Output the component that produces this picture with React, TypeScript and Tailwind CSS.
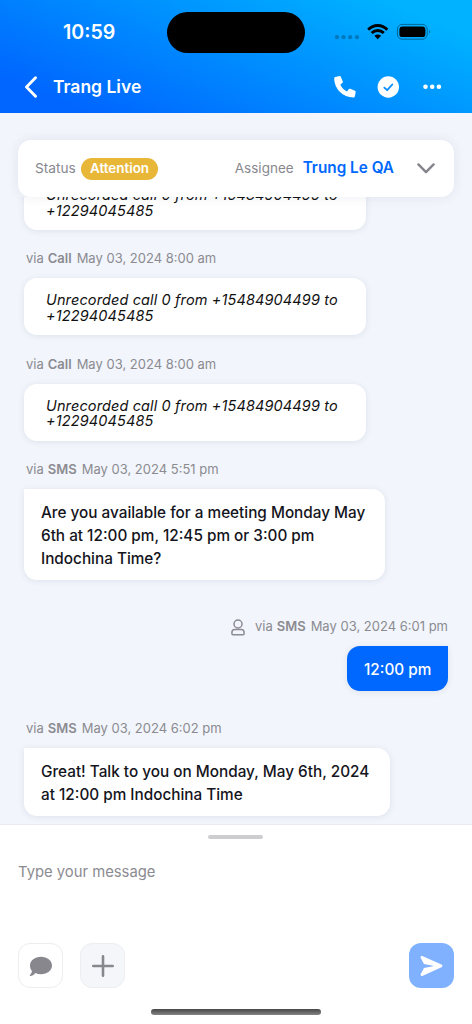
import type { ReactNode } from "react";

interface Message {
  id: number;
  channel: string;
  time?: string;
  lines: string[];
  kind: "call" | "incoming" | "outgoing";
  spacing: string;
  size: string;
}

const messages: Message[] = [
  {
    id: 1,
    channel: "Call",
    lines: ["Unrecorded call 0 from +15484904499 to", "+12294045485"],
    kind: "call",
    spacing: "",
    size: "w-[342px] h-[57px]",
  },
  {
    id: 2,
    channel: "Call",
    time: "May 03, 2024 8:00 am",
    lines: ["Unrecorded call 0 from +15484904499 to", "+12294045485"],
    kind: "call",
    spacing: "mt-[19px]",
    size: "w-[342px] h-[57px]",
  },
  {
    id: 3,
    channel: "Call",
    time: "May 03, 2024 8:00 am",
    lines: ["Unrecorded call 0 from +15484904499 to", "+12294045485"],
    kind: "call",
    spacing: "mt-[19.5px]",
    size: "w-[342px] h-[57px]",
  },
  {
    id: 4,
    channel: "SMS",
    time: "May 03, 2024 5:51 pm",
    lines: ["Are you available for a meeting Monday May", "6th at 12:00 pm, 12:45 pm or 3:00 pm", "Indochina Time?"],
    kind: "incoming",
    spacing: "mt-[19.5px]",
    size: "w-[361px] h-[91px]",
  },
  {
    id: 5,
    channel: "SMS",
    time: "May 03, 2024 6:01 pm",
    lines: ["12:00 pm"],
    kind: "outgoing",
    spacing: "mt-[37px]",
    size: "w-[101px] h-[45px]",
  },
  {
    id: 6,
    channel: "SMS",
    time: "May 03, 2024 6:02 pm",
    lines: ["Great! Talk to you on Monday, May 6th, 2024", "at 12:00 pm Indochina Time"],
    kind: "incoming",
    spacing: "mt-7",
    size: "w-[366px] h-[68px]",
  },
];

function bubbleClass(kind: Message["kind"]): string {
  switch (kind) {
    case "call":
      return "rounded-[13px] bg-white pl-[22px] pt-[2px] text-[14.5px] leading-[15.5px] tracking-[0.12px] italic text-[#111]";
    case "outgoing":
      return "rounded-[13px] rounded-tr-none bg-[#0068ff] pl-[17px] pt-px text-[15.3px] leading-[23px] font-medium text-white";
    default:
      return "rounded-[13px] rounded-tl-none bg-white pl-[17px] pt-px text-[15.3px] leading-[23px] font-medium text-[#141420]";
  }
}

function StatusBar() {
  return (
    <div className="flex h-[65px] items-end">
      <div className="flex h-[65px] w-[167px] items-center pl-[63px] text-[19.6px] font-semibold">10:59</div>
      <div className="mb-[12px] h-[41px] w-[138px] rounded-full bg-black" />
      <div className="ml-[30px] flex h-[65px] items-center pb-[2px] text-black">
        <svg width="96" height="18" viewBox="0 0 96 18" fill="currentColor">
          <g opacity="0.25">
            <circle cx="2" cy="14.2" r="2.1" />
            <circle cx="8.5" cy="14.2" r="2.1" />
            <circle cx="15.2" cy="14.2" r="2.1" />
            <circle cx="22" cy="14.2" r="2.1" />
          </g>
          <g fill="none" stroke="currentColor" strokeWidth="3">
            <path d="M33.2 6.8C38.5 1.2 47 1.2 52.3 6.8" />
            <path d="M36.7 10C40.2 6.5 45.3 6.5 48.8 10" />
          </g>
          <path d="M39.4 12.7C41.4 11 44.1 11 46.1 12.7L42.75 16.3Z" />
          <rect x="62.4" y="1.4" width="29.8" height="14.8" rx="4.8" fill="none" stroke="currentColor" strokeOpacity="0.4" />
          <rect x="64.4" y="3.5" width="26" height="10.6" rx="3.2" />
          <path d="M94 6.5Q95.7 8.8 94 11.1Z" opacity="0.45" />
        </svg>
      </div>
    </div>
  );
}

function Header() {
  return (
    <header className="h-[113px] shrink-0 bg-[linear-gradient(22deg,#0066ff_12%,#00b2ff_88%)] text-white">
      <StatusBar />
      <div className="flex h-[44px] items-center">
        <svg className="ml-[24px]" width="14" height="22" viewBox="0 0 14 22" fill="none" stroke="currentColor" strokeWidth="2.9" strokeLinecap="round" strokeLinejoin="round">
          <path d="M11.5 1.8L2.5 11L11.5 20.2" />
        </svg>
        <h1 className="ml-[15px] text-[17.5px] font-semibold">Trang Live</h1>
        <div className="ml-auto flex items-center pr-[30px]">
          <svg width="22" height="22" viewBox="0 0 22 22" fill="currentColor">
            <path d="M1.2.9 5.6.1C6.1 0 6.6.3 6.8.8L8.8 5.5C9 6 8.8 6.5 8.5 6.8L6.3 8.7C7.6 11.6 10.1 14.1 13 15.5L14.9 13.1C15.2 12.8 15.7 12.6 16.2 12.8L21 14.8C21.5 15 21.8 15.5 21.7 16L20.8 20.5C20.7 21.1 20.2 21.5 19.6 21.5 8.8 21.5.2 13 .2 2.1.2 1.5.6 1 1.2.9Z" />
          </svg>
          <svg className="ml-[21px]" width="22" height="22" viewBox="0 0 22 22" fill="none">
            <circle cx="11.3" cy="11" r="10.7" fill="white" />
            <path d="M7.3 11.6L10.2 14.2L15.3 8.5" stroke="#008cff" strokeWidth="1.8" strokeLinecap="round" strokeLinejoin="round" />
          </svg>
          <svg className="ml-[24px]" width="19" height="6" viewBox="0 0 19 6" fill="currentColor">
            <circle cx="2.5" cy="2.7" r="2.3" />
            <circle cx="9.2" cy="2.7" r="2.3" />
            <circle cx="15.9" cy="2.7" r="2.3" />
          </svg>
        </div>
      </div>
    </header>
  );
}

function StatusCard() {
  return (
    <div className="relative z-10 mx-[18px] mt-[27px] flex h-[57px] shrink-0 items-center rounded-[13px] bg-white pl-[17px] pr-[19px] shadow-[0_0_12px_rgba(40,60,100,0.09)]">
      <span className="w-[41px] text-[13.7px] text-[#88888f]">Status</span>
      <span className="ml-[5px] flex h-[22px] w-[77px] items-center justify-center rounded-full bg-[#e8b737] text-[13.4px] font-semibold text-white">
        Attention
      </span>
      <span className="ml-auto text-[13.5px] text-[#88888f]">Assignee</span>
      <span className="ml-[9px] text-[15.3px] font-semibold text-[#0068ff]">Trung Le QA</span>
      <svg className="ml-[23px]" width="18" height="11" viewBox="0 0 18 11" fill="none" stroke="#85858b" strokeWidth="2.4" strokeLinecap="round" strokeLinejoin="round">
        <path d="M1.4 1.4L9 9.2L16.6 1.4" />
      </svg>
    </div>
  );
}

function MessageRow({ message }: { message: Message }) {
  const outgoing = message.kind === "outgoing";
  return (
    <div className={`flex shrink-0 flex-col ${outgoing ? "items-end" : "items-start"} ${message.spacing}`}>
      {message.time && (
        <div className={`mb-[9px] flex h-5 items-center text-[13px] text-[#8b8b91] ${outgoing ? "" : "pl-[2px]"}`}>
          {outgoing && (
            <svg className="mr-[10px]" width="14" height="17" viewBox="0 0 14 17" fill="none" stroke="currentColor" strokeWidth="1.5">
              <circle cx="7" cy="5" r="4" />
              <path d="M3.7 10.4H10.3C12 10.4 13.1 11.8 13.1 13.5V14.5Q13.1 15.7 12 15.7H2Q.9 15.7 .9 14.5V13.5C.9 11.8 2 10.4 3.7 10.4Z" />
            </svg>
          )}
          <span>via</span>
          <span className="ml-1 font-semibold">{message.channel}</span>
          <span className="ml-[5px]">{message.time}</span>
        </div>
      )}
      <div
        className={`flex flex-col justify-center whitespace-nowrap shadow-[0_1px_6px_rgba(40,60,100,0.10)] ${message.size} ${bubbleClass(message.kind)}`}
      >
        {message.lines.map((line) => (
          <p key={line}>{line}</p>
        ))}
      </div>
    </div>
  );
}

function ToolButton({ className, children }: { className: string; children: ReactNode }) {
  return (
    <button className={`flex h-[45px] w-[45px] items-center justify-center rounded-[12px] ${className}`}>{children}</button>
  );
}

function Composer() {
  return (
    <footer className="flex h-[200px] shrink-0 flex-col border-t border-[#e8ebef] bg-white">
      <div className="mt-[10px] mr-px h-[4px] w-[55px] shrink-0 self-center rounded-full bg-[#cdcdcf]" />
      <div className="ml-[18px] mt-[21px] h-6 text-[14.8px] leading-6 text-[#8b8b91]">Type your message</div>
      <div className="mx-[18px] mt-[59px] flex">
        <ToolButton className="border border-[#ededf0] bg-white">
          <svg width="24" height="22" viewBox="0 0 24 22" fill="#87878d">
            <path d="M12 1.7C18 1.7 23 5.5 23 10.6S18 19.3 12 19.3C10 19.3 8.1 18.9 6.4 18.1C5 20 3 21 1.2 21C.7 20.8 .7 20.2 1.1 19.8C2.5 18.4 2.9 17 2.9 16C1.6 14.5 1 12.6 1 10.6C1 5.5 6 1.7 12 1.7Z" />
          </svg>
        </ToolButton>
        <ToolButton className="ml-[17px] border border-[#eceef2] bg-[#f5f6fa]">
          <svg width="22" height="22" viewBox="0 0 22 22" stroke="#87878d" strokeWidth="2.6" strokeLinecap="round">
            <path d="M11 1.3V20.7M1.3 11H20.7" />
          </svg>
        </ToolButton>
        <ToolButton className="ml-auto bg-[#7fb1ff]">
          <svg width="23" height="22" viewBox="0 0 23 22" fill="white">
            <path d="M2.3 1.1L21.5 9.6C22.8 10.3 22.8 11.6 21.5 12.2L2.3 20.9C1 21.4 .3 20.3 .7 19.1L4 13.1L13 11.3C13.5 11.2 13.5 10.8 13 10.7L4 8.9L.7 2.9C.2 1.6 1 .6 2.3 1.1Z" />
          </svg>
        </ToolButton>
      </div>
      <div className="mt-[21px] h-[6px] w-[170px] shrink-0 self-center rounded-full bg-linear-to-b from-[#474747] to-[#858585]" />
    </footer>
  );
}

export default function App() {
  return (
    <div className="flex h-[1024px] w-[472px] flex-col overflow-hidden bg-[#f2f5fb] font-['Inter','Liberation_Sans',sans-serif]">
      <Header />
      <StatusCard />
      <main className="flex min-h-0 flex-1 flex-col justify-end overflow-hidden px-6 pb-2">
        {messages.map((message) => (
          <MessageRow key={message.id} message={message} />
        ))}
      </main>
      <Composer />
    </div>
  );
}
